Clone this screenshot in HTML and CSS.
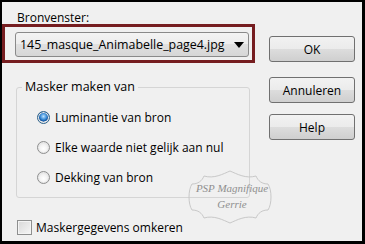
FILE: index.html
```html
<!DOCTYPE html>
<html lang="en">
<head>
<meta charset="UTF-8">
<title>Masker uit afbeelding</title>
<link rel="stylesheet" href="styles.css">
</head>
<body>
<div class="dialog">
    <div class="left">
        <div class="label">Bronvenster:</div>
        <div class="highlight">
            <div class="select">
                <span class="select-text">145_masque_Animabelle_page4.jpg</span>
                <span class="arrow"></span>
            </div>
        </div>
        <fieldset class="group">
            <legend>Masker maken van</legend>
            <div class="radio-row"><span class="radio checked"></span>Luminantie van bron</div>
            <div class="radio-row"><span class="radio"></span>Elke waarde niet gelijk aan nul</div>
            <div class="radio-row"><span class="radio"></span>Dekking van bron</div>
        </fieldset>
        <div class="check-row"><span class="checkbox"></span>Maskergegevens omkeren</div>
    </div>
    <div class="buttons">
        <button class="btn btn-ok">OK</button>
        <button class="btn btn-cancel">Annuleren</button>
        <button class="btn btn-help">Help</button>
    </div>

    <!-- watermark over the dialog -->
    <svg class="watermark" width="90" height="54" viewBox="0 0 90 54">
        <path d="M7 14 C13 14 17 11 19 6 C29 9 38 4 45 1 C52 4 61 9 71 6 C73 11 77 14 83 14 C87 20 87 34 83 40 C77 40 73 43 71 48 C61 45 52 50 45 53 C38 50 29 45 19 48 C17 43 13 40 7 40 C3 34 3 20 7 14 Z" fill="none" stroke="#c8c8c8" stroke-width="1"/>
        <text x="47" y="22" class="wm-text" text-anchor="middle">PSP Magnifique</text>
        <text x="47" y="38" class="wm-text" text-anchor="middle">Gerrie</text>
    </svg>
</div>
</body>
</html>
```

FILE: styles.css
```css
html, body {
    margin: 0;
    padding: 0;
}
body {
    font-family: "Open Sans", "Noto Sans", sans-serif;
    font-size: 12px;
    color: #000;
}
.dialog {
    position: relative;
    box-sizing: border-box;
    width: 365px;
    height: 244px;
    border: 2px solid #000;
    border-right-width: 3px;
    border-bottom-width: 3px;
    background: #f0f0f0;
    padding-top: 10px;
    display: grid;
    grid-template-columns: 253px 86px;
    column-gap: 14px;
    align-items: start;
}
.label {
    padding-left: 15px;
    line-height: 12px;
    height: 12px;
}
.highlight {
    border: 3px solid #761d20;
    padding: 5px 3px 3px 10px;
}
.select {
    box-sizing: border-box;
    height: 25px;
    border: 1px solid #8a8a8a;
    border-radius: 3px;
    background: linear-gradient(#f4f4f4, #ececec 50%, #e0e0e0 50%, #d6d6d6);
    display: flex;
    align-items: center;
    padding: 0 4px 0 4px;
}
.select-text {
    flex: 1;
    font-size: 12.4px;
}
.arrow {
    width: 0;
    height: 0;
    border-left: 5px solid transparent;
    border-right: 5px solid transparent;
    border-top: 6px solid #000;
}
.group {
    margin: 16px 0 0 14px;
    width: 234px;
    height: 119px;
    box-sizing: border-box;
    border: 1px solid #d5d5d5;
    border-radius: 3px;
    padding: 7px 0 0 20px;
}
.group legend {
    padding: 0 3px;
    margin-left: -15px;
    line-height: 16px;
    font-size: 12.5px;
}
.radio-row {
    display: flex;
    align-items: center;
    height: 30px;
}
.radio {
    box-sizing: border-box;
    width: 13px;
    height: 13px;
    margin-right: 5px;
    border-radius: 50%;
    border: 1px solid #8e8f8f;
    background: radial-gradient(circle at 50% 60%, #ffffff 0%, #f3f3f3 45%, #cfcfcf 100%);
    box-shadow: inset 0 0 0 1px #e8e8e8;
}
.radio.checked {
    border-color: #2c628b;
    background: radial-gradient(circle at 50% 40%, #bde3ff 0%, #3f8fd8 35%, #0c4d99 58%, #eaeaea 62%, #d8d8d8 100%);
}
.check-row {
    display: flex;
    align-items: center;
    margin: 21px 0 0 15px;
}
.checkbox {
    box-sizing: border-box;
    width: 15px;
    height: 15px;
    margin-right: 4px;
    border: 1px solid #8e8f8f;
    background: linear-gradient(135deg, #d8d8d8, #f6f6f6);
    box-shadow: inset 0 0 0 1px #f4f4f4;
}
.buttons {
    display: flex;
    flex-direction: column;
    padding-top: 24px;
}
.btn {
    box-sizing: border-box;
    width: 86px;
    height: 26px;
    border: 1px solid #707070;
    border-radius: 3px;
    background: linear-gradient(#f2f2f2, #ebebeb 50%, #dddddd 50%, #cfcfcf);
    font-family: inherit;
    font-size: 12px;
    color: #000;
    padding: 0;
}
.btn-cancel {
    margin-top: 15px;
}
.btn-help {
    margin-top: 11px;
}
.watermark {
    position: absolute;
    left: 183px;
    top: 168px;
}
.wm-text {
    font-family: "Liberation Serif", serif;
    font-style: italic;
    font-size: 11px;
    fill: #8f8f8f;
}
```
